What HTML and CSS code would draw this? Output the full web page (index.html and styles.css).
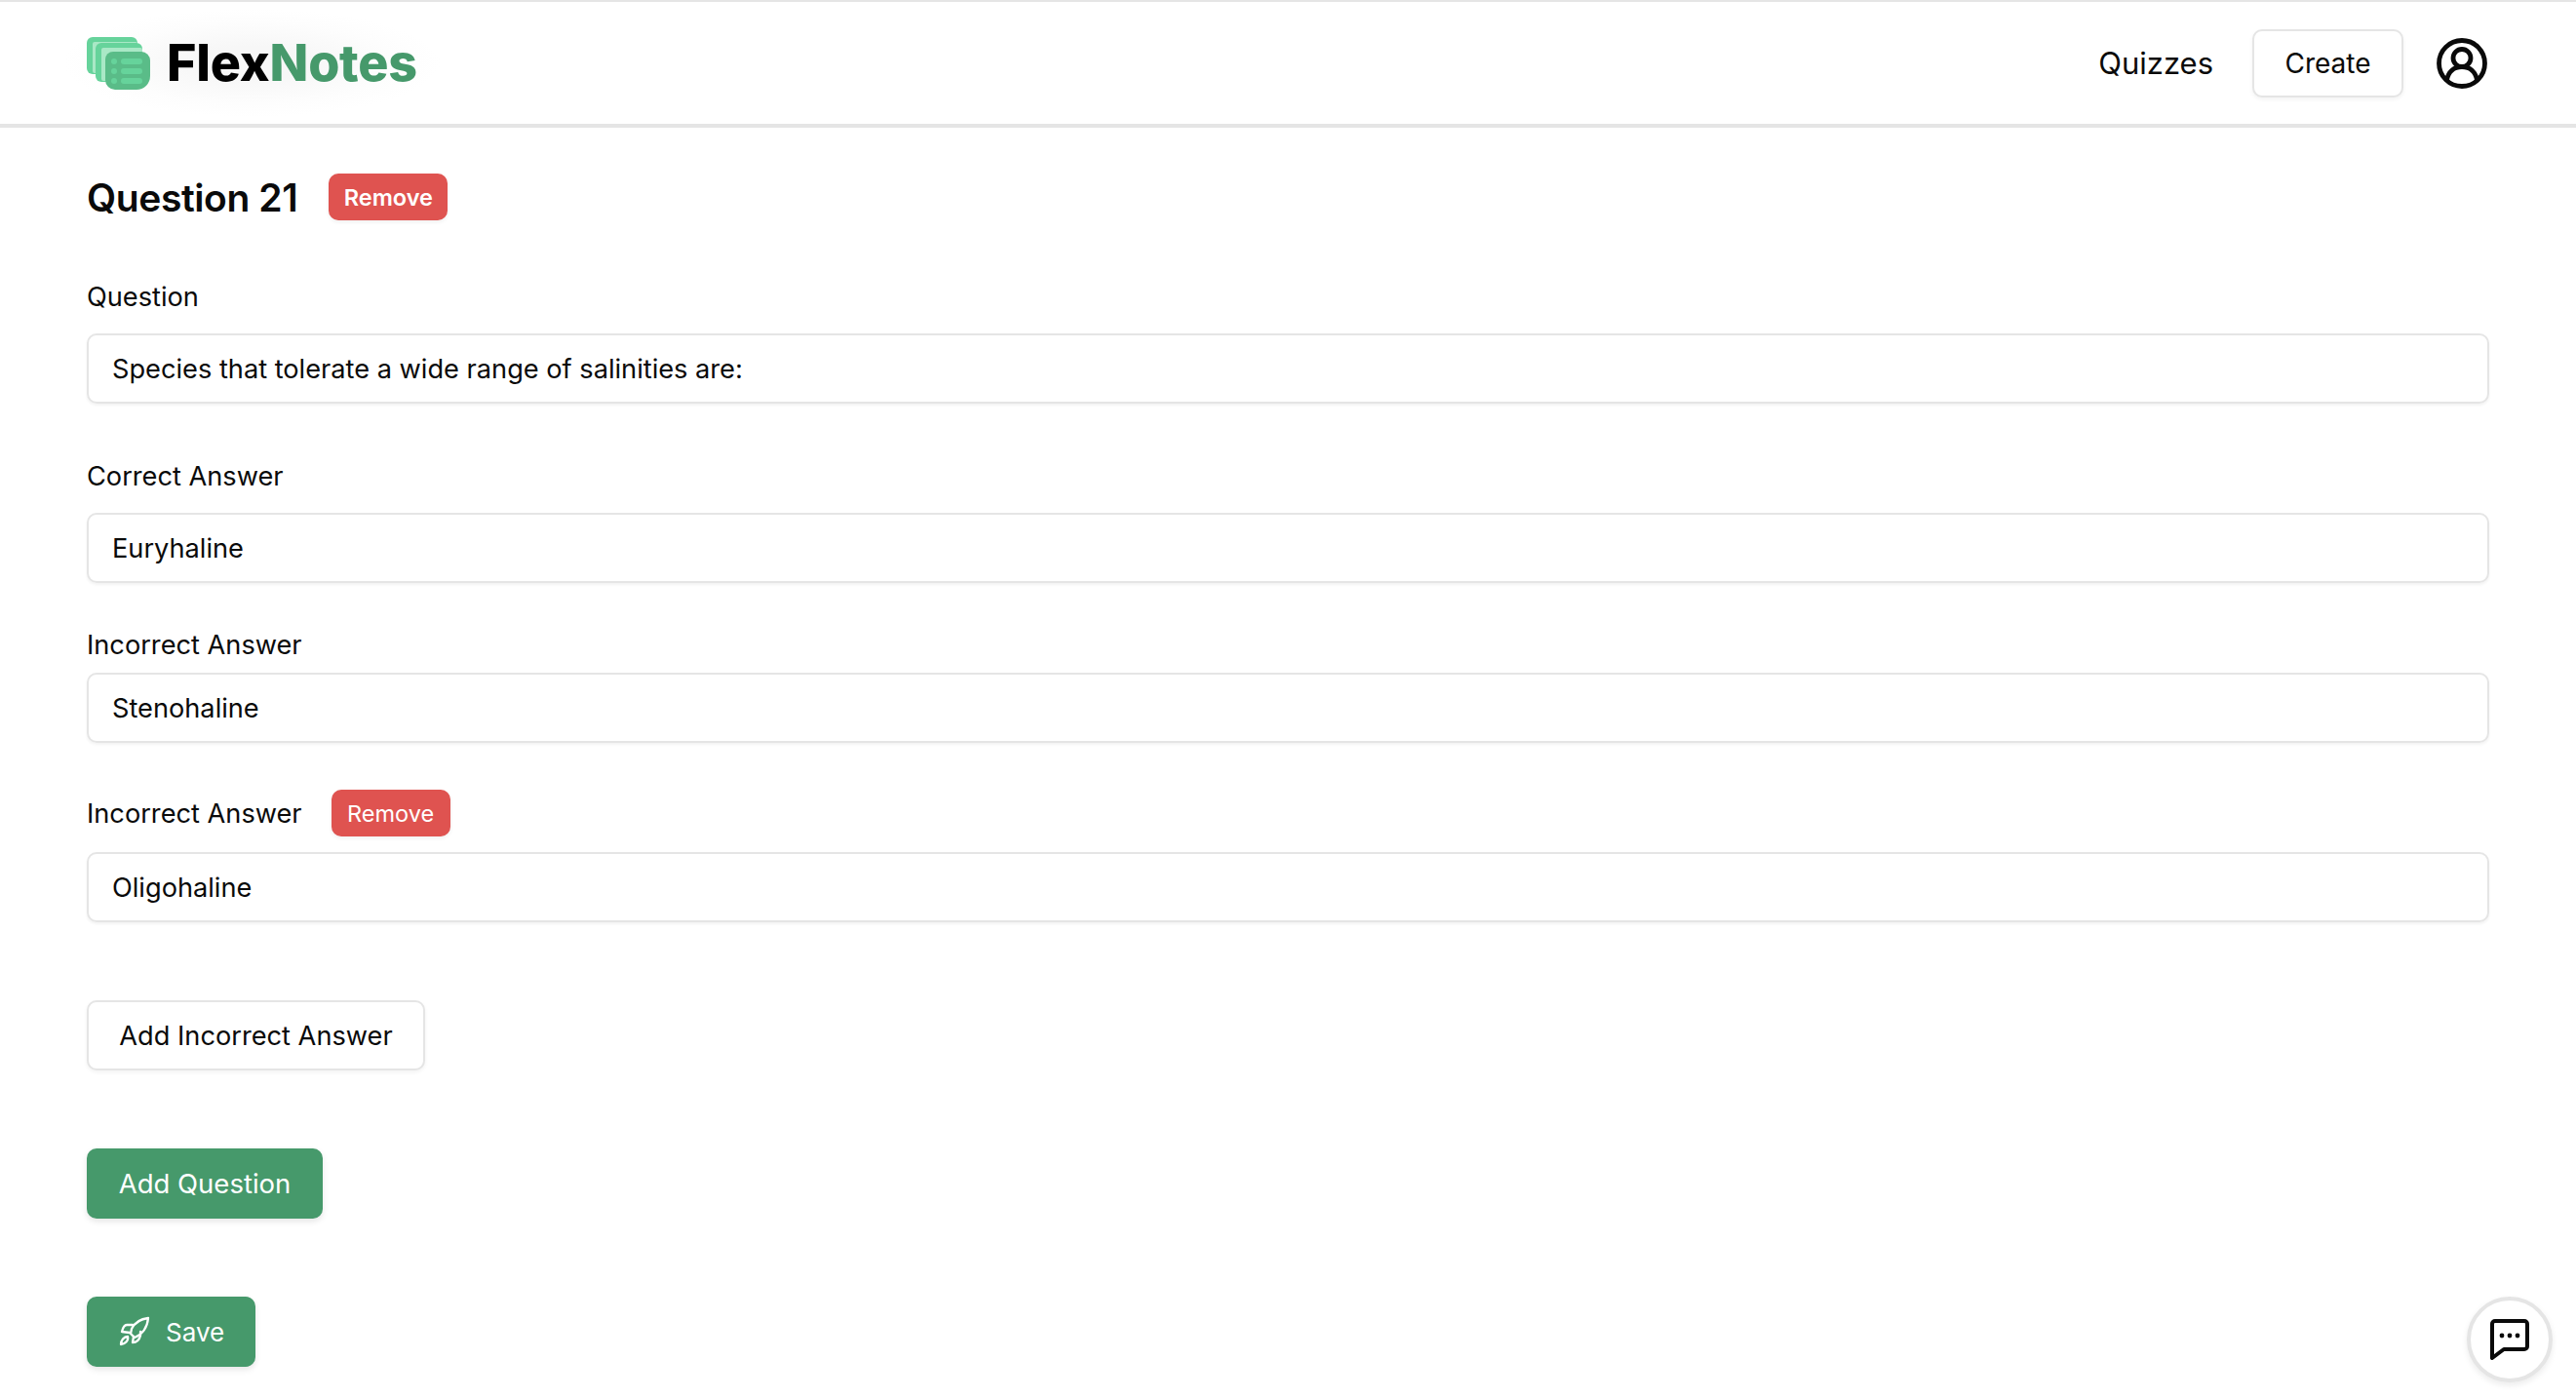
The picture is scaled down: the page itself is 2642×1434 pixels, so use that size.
FILE: index.html
```html
<!DOCTYPE html>
<html lang="en">
<head>
<meta charset="utf-8">
<title>FlexNotes</title>
<link rel="stylesheet" href="styles.css">
</head>
<body>
<header class="topbar">
  <div class="brand">
    <svg class="brand-icon" viewBox="0 0 66 54" width="66" height="54" aria-hidden="true">
      <rect x="0" y="0" width="52" height="38" rx="6" fill="#66d39b"/>
      <rect x="6" y="5" width="46" height="32" rx="2" fill="#a9e8c6"/>
      <rect x="9" y="6" width="48" height="40" rx="6" fill="#66d39b"/>
      <rect x="15" y="11" width="42" height="34" rx="2" fill="#a9e8c6"/>
      <path d="M27 15h29a9 9 0 0 1 9 9v16a14 14 0 0 1-14 14H29a10 10 0 0 1-10-10V23a8 8 0 0 1 8-8z" fill="#5abc88"/>
      <circle cx="28" cy="25" r="3" fill="#66d39b"/>
      <circle cx="28" cy="35" r="3" fill="#66d39b"/>
      <circle cx="28" cy="45" r="3" fill="#66d39b"/>
      <rect x="35" y="22" width="22" height="6" rx="3" fill="#66d39b"/>
      <rect x="35" y="32" width="22" height="6" rx="3" fill="#66d39b"/>
      <rect x="35" y="42" width="22" height="6" rx="3" fill="#66d39b"/>
    </svg>
    <span class="brand-name">Flex<span class="brand-accent">Notes</span></span>
  </div>
  <nav class="nav">
    <a class="nav-link">Quizzes</a>
    <button class="btn btn-outline btn-nav">Create</button>
    <svg class="avatar" viewBox="0 0 52 52" width="52" height="52" aria-hidden="true" fill="none" stroke="#0a0a0a" stroke-width="4.800">
      <circle cx="26" cy="26" r="23.500"/>
      <circle cx="26" cy="20.500" r="9"/>
      <path d="M10.500 43c1.500-8 7-13.500 15.500-13.500S40 35 41.500 43"/>
    </svg>
  </nav>
</header>
<main class="content">
  <div class="title-row">
    <h1 class="title">Question 21</h1>
    <button class="btn-remove btn-remove-strong">Remove</button>
  </div>
  <section class="field field-question">
    <label class="label">Question</label>
    <div class="input">Species that tolerate a wide range of salinities are:</div>
  </section>
  <section class="field field-correct">
    <label class="label">Correct Answer</label>
    <div class="input">Euryhaline</div>
  </section>
  <section class="field field-wrong">
    <label class="label">Incorrect Answer</label>
    <div class="input">Stenohaline</div>
  </section>
  <section class="field field-wrong2">
    <div class="label-row">
      <label class="label">Incorrect Answer</label>
      <button class="btn-remove">Remove</button>
    </div>
    <div class="input">Oligohaline</div>
  </section>
  <button class="btn btn-outline btn-add-wrong">Add Incorrect Answer</button>
  <button class="btn btn-green btn-add-q">Add Question</button>
  <button class="btn btn-green btn-save">
    <svg viewBox="-1 -1 32 32" width="32" height="32" fill="none" stroke="#fff" stroke-width="2.300" stroke-linejoin="round" stroke-linecap="round" aria-hidden="true">
      <path d="M29 1C20 2 15 6 12 12l-1 5 4 4c7-3 13-9 14-20z"/>
      <path d="M13 8H7C5 8 3 11 2 15l8 1"/>
      <path d="M14 20l-1 6c4 0 7-3 8-7v-4"/>
      <path d="M1 28c0-4 3-8 7-8 1 4-3 8-7 8z"/>
    </svg>
    Save
  </button>
</main>
<button class="chat" aria-label="Chat">
  <svg viewBox="0 0 42 42" width="42" height="42" fill="none" aria-hidden="true">
    <path d="M6 2h30a3 3 0 0 1 3 3v23a3 3 0 0 1-3 3H15L3 40V5a3 3 0 0 1 3-3z" stroke="#0a0a0a" stroke-width="4" stroke-linejoin="round"/>
    <circle cx="13" cy="17" r="2.400" fill="#0a0a0a"/>
    <circle cx="21" cy="17" r="2.400" fill="#0a0a0a"/>
    <circle cx="29" cy="17" r="2.400" fill="#0a0a0a"/>
  </svg>
</button>
</body>
</html>
```
FILE: styles.css
```css
* { box-sizing: border-box; }
html, body { margin: 0; padding: 0; height: 100%; overflow: hidden; }
body {
  background: #fff;
  color: #0a0a0a;
  font-family: "Inter", "Liberation Sans", sans-serif;
  font-size: 27px;
  border-top: 2px solid #e5e5e5;
}
.topbar {
  height: 129px;
  display: flex;
  align-items: center;
  justify-content: space-between;
  padding: 0 91px 0 89px;
  border-bottom: 4px solid #e5e5e5;
}
.brand {
  display: flex;
  align-items: center;
  gap: 16px;
  position: relative;
  z-index: 0;
}
.brand::before {
  content: "";
  position: absolute;
  inset: -24px;
  z-index: -1;
  background: radial-gradient(closest-side, #f7f7f7 30%, #fdfdfd 75%, #fff 100%);
}
.brand-name {
  font-weight: 800;
  font-size: 52px;
  letter-spacing: -.2px;
  color: #000;
}
.brand-accent { color: #46996b; }
.nav { display: flex; align-items: center; }
.nav-link { font-size: 31px; margin-right: 40px; }
.btn {
  font-family: inherit;
  border-radius: 10px;
  display: inline-flex;
  align-items: center;
  justify-content: center;
  cursor: pointer;
  font-size: 27.500px;
}
.btn-outline {
  background: #fff;
  color: #0a0a0a;
  border: 2px solid #e5e5e5;
  box-shadow: 0 2px 4px rgba(0, 0, 0, .05);
}
.btn-green {
  background: #46996b;
  color: #fff;
  border: 0;
  box-shadow: 0 3px 6px rgba(0, 0, 0, .1);
}
.btn-nav { width: 155px; height: 70px; margin-right: 34px; font-size: 28px; }
.avatar { display: block; }
.content { padding: 47px 89px 0; display: flex; flex-direction: column; align-items: flex-start; }
.title-row, .label-row { display: flex; align-items: center; }
.title-row { gap: 32px; height: 48px; }
.title { margin: 0; font-size: 39px; font-weight: 600; letter-spacing: -.4px; }
.btn-remove {
  height: 48px;
  width: 122px;
  border: 0;
  border-radius: 10px;
  background: #df5350;
  color: #fff;
  font-family: inherit;
  font-size: 23.500px;
  box-shadow: 0 2px 4px rgba(0, 0, 0, .06);
}
.btn-remove-strong { font-weight: 600; }
.field { width: 100%; }
.label { display: block; font-size: 27.200px; line-height: 34px; }
.input {
  height: 72px;
  border: 2px solid #e5e5e5;
  border-radius: 10px;
  box-shadow: 0 2px 3px rgba(0, 0, 0, .05);
  display: flex;
  align-items: center;
  padding-left: 24px;
  font-size: 27.200px;
}
.label-row { gap: 30px; height: 48px; }
.label-row .label { padding-top: 2px; }
.field-question { margin-top: 62px; }
.field-question .input, .field-correct .input { margin-top: 20px; }
.field-correct { margin-top: 58px; }
.field-wrong { margin-top: 47px; }
.field-wrong .input { margin-top: 11px; }
.field-wrong2 { margin-top: 48px; }
.field-wrong2 .input { margin-top: 16px; }
.btn-add-wrong { margin-top: 80px; width: 347px; height: 72px; font-size: 27.200px; }
.btn-add-q { margin-top: 80px; width: 242px; height: 72px; }
.btn-save { margin-top: 80px; width: 173px; height: 72px; gap: 16px; justify-content: flex-start; padding-left: 33px; font-size: 26px; }
.chat {
  position: fixed;
  left: 2530px;
  top: 1330px;
  width: 88px;
  height: 88px;
  border-radius: 50%;
  background: #fff;
  border: 4px solid #e5e5e5;
  box-shadow: 0 3px 6px rgba(0, 0, 0, .08);
  display: flex;
  align-items: center;
  justify-content: center;
  padding: 0;
}
```
